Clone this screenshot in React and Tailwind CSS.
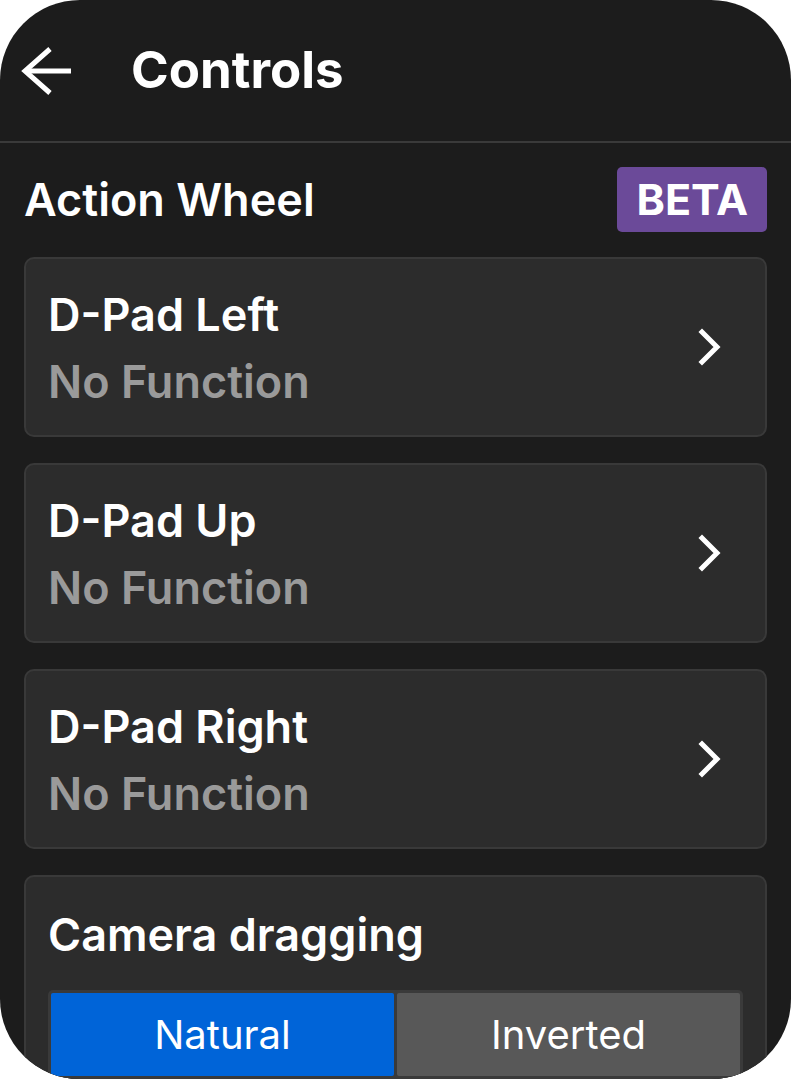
const wheelSlots = [
  { label: 'D-Pad Left', value: 'No Function' },
  { label: 'D-Pad Up', value: 'No Function' },
  { label: 'D-Pad Right', value: 'No Function' },
];

function BackArrow() {
  return (
    <svg width="52" height="52" viewBox="0 0 52 52" fill="none" stroke="white" strokeWidth="5" strokeLinecap="butt" strokeLinejoin="miter">
      <path d="M4 26H50" />
      <path d="M29 4L4 26L29 48" />
    </svg>
  );
}

function Chevron() {
  return (
    <svg width="26" height="40" viewBox="0 0 26 40" fill="none" stroke="white" strokeWidth="5" strokeLinecap="square" strokeLinejoin="miter">
      <path d="M5 5L20 20L5 35" />
    </svg>
  );
}

function SlotCard({ label, value }) {
  return (
    <button className="flex h-[180px] w-full items-center justify-between rounded-[10px] border-2 border-[#393939] bg-[#2c2c2c] pl-[22px] pr-[42px] text-left">
      <div className="pt-[2px] leading-[67px]">
        <div className="text-[45px] font-semibold text-white">{label}</div>
        <div className="text-[45px] font-semibold text-[#9a9a9a]">{value}</div>
      </div>
      <Chevron />
    </button>
  );
}

export default function App() {
  return (
    <div className="h-[1079px] w-[791px] bg-white" style={{ fontFamily: 'Inter, "Noto Sans", sans-serif' }}>
      <div className="flex h-full flex-col overflow-hidden rounded-[80px] bg-[#1c1c1c]">
        {/* Header */}
        <header className="flex h-[143px] shrink-0 items-center border-b-2 border-[#3a3a3a]">
          <div className="ml-[21px]">
            <BackArrow />
          </div>
          <h1 className="ml-[58px] text-[51px] font-bold text-white">Controls</h1>
        </header>

        <div className="flex flex-col px-[24px] pt-[24px]">
          {/* Section title */}
          <div className="flex h-[65px] items-center justify-between">
            <h2 className="text-[45px] font-semibold text-white">Action Wheel</h2>
            <span className="flex h-[65px] items-center rounded-[5px] bg-[#6b4a99] px-[19px] text-[43px] font-bold text-white">
              BETA
            </span>
          </div>

          <div className="mt-[25px] flex flex-col gap-[26px]">
            {wheelSlots.map((slot) => (
              <SlotCard key={slot.label} {...slot} />
            ))}

            {/* Camera dragging */}
            <div className="rounded-[10px] border-2 border-[#393939] bg-[#2c2c2c] px-[22px] pt-[25px] pb-[24px]">
              <div className="text-[45px] font-semibold leading-[66px] text-white">Camera dragging</div>
              <div className="mt-[22px] grid h-[89px] grid-cols-2 gap-[3px] rounded-[5px] bg-[#3a3a3a] p-[3px]">
                <button className="flex items-center justify-center rounded-[2px] bg-[#0064d8] text-[40px] text-white">
                  Natural
                </button>
                <button className="flex items-center justify-center rounded-[2px] bg-[#585858] text-[40px] text-white">
                  Inverted
                </button>
              </div>
            </div>
          </div>
        </div>
      </div>
    </div>
  );
}
